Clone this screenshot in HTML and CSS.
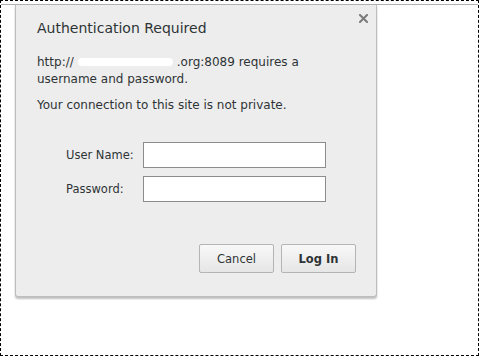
FILE: index.html
```html
<!DOCTYPE html>
<html lang="en">
<head>
    <meta charset="UTF-8">
    <meta name="viewport" content="width=device-width, initial-scale=1.0">
    <title>Authentication Required</title>
    <link rel="stylesheet" href="styles.css">
</head>
<body>
    <div class="frame">
        <div class="toolbar"></div>

        <div class="dialog">
            <button class="close-btn" title="Close">
                <svg width="9" height="9" viewBox="0 0 9 9">
                    <path d="M1 1 L8 8 M8 1 L1 8" stroke="#7a7a7a" stroke-width="2" stroke-linecap="square"/>
                </svg>
            </button>

            <h1>Authentication Required</h1>

            <p class="message">http://<span class="hidden-host"></span>.org:8089 requires a username and password.</p>
            <p class="message">Your connection to this site is not private.</p>

            <div class="login-form">
                <label for="username">User Name:</label>
                <input type="text" id="username" class="text-input">
                <label for="password">Password:</label>
                <input type="password" id="password" class="text-input">
            </div>

            <div class="actions">
                <button class="btn">Cancel</button>
                <button class="btn btn-default">Log In</button>
            </div>
        </div>
    </div>
</body>
</html>
```

FILE: styles.css
```css
html, body {
    margin: 0;
    padding: 0;
    background-color: #fff;
}
body {
    font-family: "DejaVu Sans", sans-serif;
    color: #2e3436;
}
.frame {
    width: 479px;
    height: 356px;
    box-sizing: border-box;
    border: 1px dashed #000;
    overflow: hidden;
}
.toolbar {
    height: 3px;
    border-bottom: 1px solid #b0b0b0;
}
.dialog {
    position: relative;
    width: 362px;
    margin-left: 14px;
    box-sizing: border-box;
    padding: 13px 20px 23px 21px;
    background-color: #ededed;
    border: 1px solid #bdbdbd;
    border-top: none;
    border-radius: 0 0 3px 3px;
    box-shadow: 0 2px 2px rgba(0,0,0,0.25);
}
.close-btn {
    position: absolute;
    top: 7px;
    right: 6px;
    width: 13px;
    height: 13px;
    padding: 2px;
    border: none;
    background: none;
    cursor: pointer;
}
.close-btn svg {
    display: block;
}
h1 {
    margin: 0;
    font-size: 14px;
    font-weight: normal;
    line-height: 20px;
    color: #2e3436;
}
.message {
    margin: 16px 0 0 0;
    width: 300px;
    font-size: 12px;
    line-height: 17px;
}
.message + .message {
    margin-top: 9px;
}
.hidden-host {
    display: inline-block;
    width: 95px;
    height: 8px;
    margin: 0 4px 0 4px;
    vertical-align: 0;
    background-color: #fff;
    border-radius: 4px;
}
.login-form {
    display: grid;
    grid-template-columns: 77px 183px;
    row-gap: 8px;
    align-items: center;
    margin: 28px 0 0 29px;
    font-size: 11.5px;
}
.text-input {
    box-sizing: border-box;
    width: 183px;
    height: 26px;
    margin: 0;
    border: 1px solid #8c8c8c;
    background-color: #fff;
    font: inherit;
}
.actions {
    display: flex;
    justify-content: flex-end;
    gap: 7px;
    margin-top: 42px;
}
.btn {
    width: 75px;
    height: 29px;
    padding: 0;
    border: 1px solid #b4b4b4;
    border-radius: 2px;
    background: linear-gradient(#f8f8f8, #e6e6e6);
    font-family: inherit;
    font-size: 11.5px;
    color: #2e3436;
    cursor: pointer;
}
.btn-default {
    font-weight: bold;
}
```
